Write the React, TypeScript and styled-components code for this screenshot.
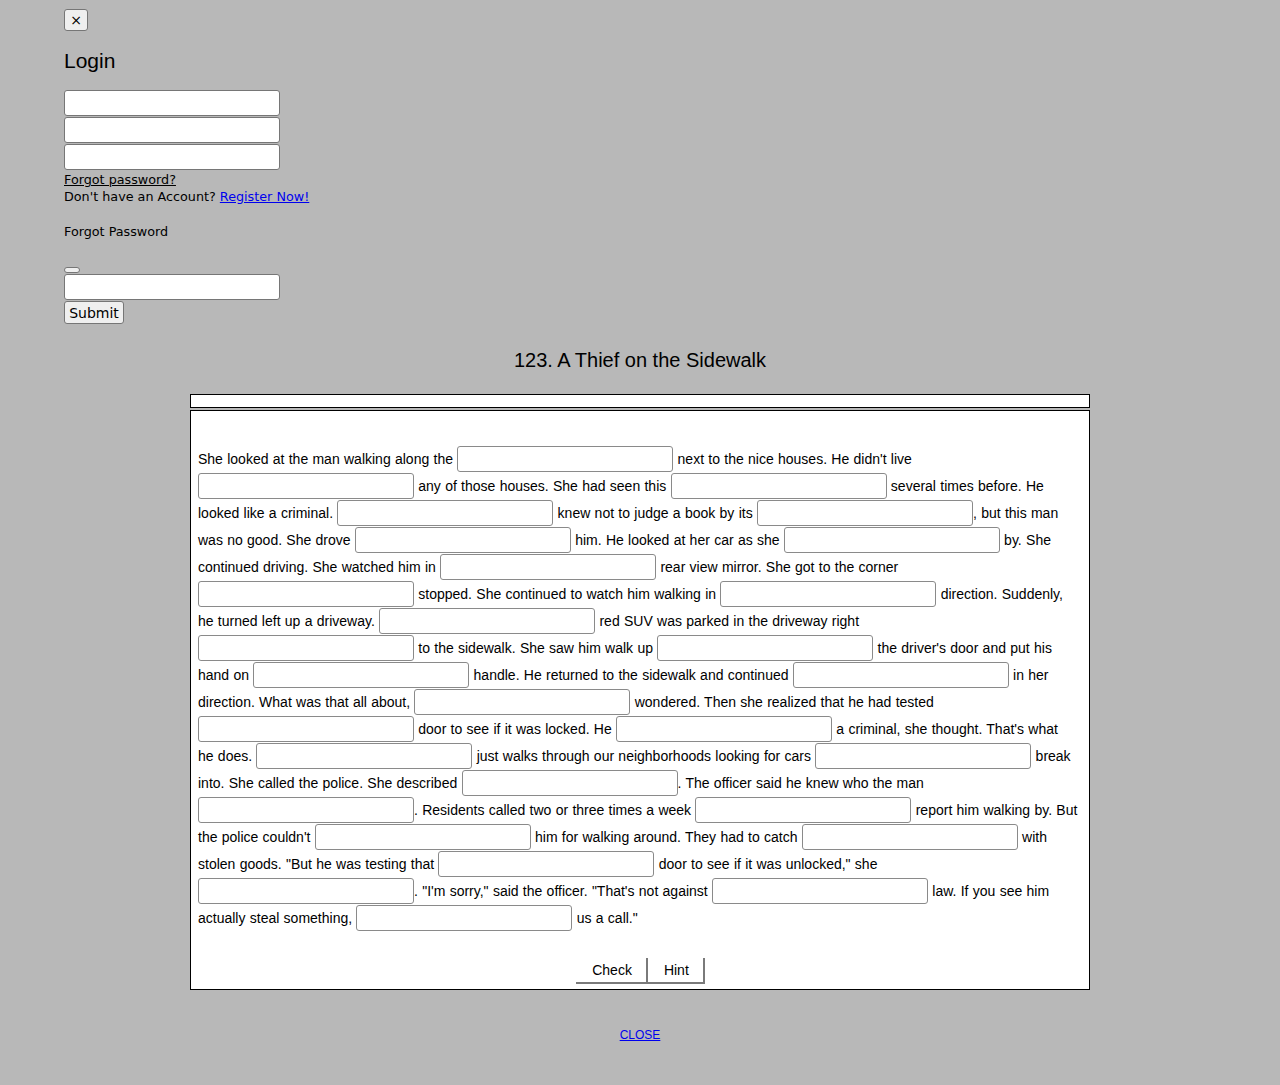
import React from "react";
import styled, { createGlobalStyle } from "styled-components";

const GlobalStyle = createGlobalStyle`
  html, body {
    margin: 0;
    padding: 0;
    background: #b8b8b8;
  }
  body {
    font-family: "DejaVu Sans", sans-serif;
    color: #000;
  }
`;

const Page = styled.div`
  min-height: 1085px;
  background: #b8b8b8;
  padding-top: 9px;
`;

const LoginPanel = styled.div`
  padding-left: 64px;
  display: flex;
  flex-direction: column;
  align-items: flex-start;
  font-family: "DejaVu Sans", sans-serif;
  font-size: 12.75px;
  line-height: 17px;
`;

const NativeButton = styled.button<{ $w?: number; $h?: number }>`
  box-sizing: border-box;
  width: ${(p) => (p.$w ? `${p.$w}px` : "auto")};
  height: ${(p) => (p.$h ? `${p.$h}px` : "auto")};
  padding: 0;
  background: #efefef;
  border: 1px solid #767676;
  border-radius: 3px;
  font-family: "DejaVu Sans", sans-serif;
  font-size: 14px;
  color: #000;
  display: flex;
  align-items: center;
  justify-content: center;
`;

const Heading = styled.h2`
  margin: 18px 0 17px;
  font-family: "Liberation Sans", sans-serif;
  font-weight: normal;
  font-size: 21px;
  line-height: 24px;
`;

const InputStack = styled.div<{ $top?: number }>`
  display: flex;
  flex-direction: column;
  gap: 1px;
  margin-top: ${(p) => p.$top ?? 0}px;
  margin-bottom: 1px;
`;

const TextInput = styled.input`
  box-sizing: border-box;
  width: 216px;
  height: 26px;
  margin: 0;
  padding: 0 4px;
  background: #fff;
  border: 1px solid #767676;
  border-radius: 3px;
  outline: none;
`;

const Line = styled.div`
  white-space: nowrap;
`;

const PlainLink = styled.a`
  color: #000;
  text-decoration: underline;
`;

const BlueLink = styled.a`
  color: #0000ee;
  text-decoration: underline;
`;

const SubHeading = styled.div`
  margin-top: 18px;
  margin-bottom: 27px;
`;

const Title = styled.h1`
  margin: 24px 0 22px;
  text-align: center;
  font-family: "Liberation Sans", sans-serif;
  font-weight: normal;
  font-size: 20px;
  line-height: 24px;
`;

const Frame = styled.div`
  width: 900px;
  margin: 0 auto;
  display: flex;
  flex-direction: column;
  gap: 2px;
`;

const TopBar = styled.div`
  box-sizing: border-box;
  height: 14px;
  background: #fff;
  border: 1px solid #000;
`;

const Exercise = styled.div`
  box-sizing: border-box;
  height: 580px;
  background: #fff;
  border: 1px solid #000;
  padding: 35px 7px 0;
  display: flex;
  flex-direction: column;
`;

const Passage = styled.div`
  font-family: "Liberation Sans", sans-serif;
  font-size: 14px;
  line-height: 27px;
  word-spacing: 0.4px;
`;

const PassageLine = styled.div`
  height: 27px;
  white-space: pre;
`;

const Blank = styled.input`
  box-sizing: border-box;
  width: 216px;
  height: 26px;
  margin: 0;
  padding: 0 4px;
  vertical-align: middle;
  background: #fff;
  border: 1px solid #8a8a8a;
  border-radius: 3px;
  outline: none;
  position: relative;
  top: -1px;
`;

const Actions = styled.div`
  margin-top: 26px;
  display: flex;
  justify-content: center;
  padding-left: 1px;
`;

const ActionButton = styled.button`
  box-sizing: border-box;
  height: 26px;
  padding: 0 14px 0 16px;
  background: #fff;
  border-style: solid;
  border-width: 0 2px 2px 0;
  border-color: #7a7a7a;
  font-family: "Liberation Sans", sans-serif;
  font-size: 14px;
  color: #000;
`;

const Footer = styled.div`
  margin-top: 38px;
  text-align: center;
  font-family: "Liberation Sans", sans-serif;
  font-size: 12px;
`;

type Seg = string | null;

const LINES: Seg[][] = [
  ["She looked at the man walking along the ", null, " next to the nice houses. He didn't live"],
  [null, " any of those houses. She had seen this ", null, " several times before. He"],
  ["looked like a criminal. ", null, " knew not to judge a book by its ", null, ", but this man"],
  ["was no good. She drove ", null, " him. He looked at her car as she ", null, " by. She"],
  ["continued driving. She watched him in ", null, " rear view mirror. She got to the corner"],
  [null, " stopped. She continued to watch him walking in ", null, " direction. Suddenly,"],
  ["he turned left up a driveway. ", null, " red SUV was parked in the driveway right"],
  [null, " to the sidewalk. She saw him walk up ", null, " the driver's door and put his"],
  ["hand on ", null, " handle. He returned to the sidewalk and continued ", null, " in her"],
  ["direction. What was that all about, ", null, " wondered. Then she realized that he had tested"],
  [null, " door to see if it was locked. He ", null, " a criminal, she thought. That's what"],
  ["he does. ", null, " just walks through our neighborhoods looking for cars ", null, " break"],
  ["into. She called the police. She described ", null, ". The officer said he knew who the man"],
  [null, ". Residents called two or three times a week ", null, " report him walking by. But"],
  ["the police couldn't ", null, " him for walking around. They had to catch ", null, " with"],
  ["stolen goods. \"But he was testing that ", null, " door to see if it was unlocked,\" she"],
  [null, ". \"I'm sorry,\" said the officer. \"That's not against ", null, " law. If you see him"],
  ["actually steal something, ", null, " us a call.\""],
];

export default function App() {
  return (
    <>
      <GlobalStyle />
      <Page>
        <LoginPanel>
          <NativeButton $w={24} $h={22}>×</NativeButton>
          <Heading>Login</Heading>
          <InputStack>
            <TextInput />
            <TextInput />
            <TextInput />
          </InputStack>
          <Line>
            <PlainLink href="#">Forgot password?</PlainLink>
          </Line>
          <Line>
            Don't have an Account? <BlueLink href="#">Register Now!</BlueLink>
          </Line>
          <SubHeading>Forgot Password</SubHeading>
          <NativeButton $w={16} $h={6} />
          <InputStack $top={1}>
            <TextInput />
          </InputStack>
          <NativeButton $w={60} $h={23}>Submit</NativeButton>
        </LoginPanel>

        <Title>123. A Thief on the Sidewalk</Title>

        <Frame>
          <TopBar />
          <Exercise>
            <Passage>
              {LINES.map((line, i) => (
                <PassageLine key={i}>
                  {line.map((seg, j) =>
                    seg === null ? <Blank key={j} type="text" /> : <React.Fragment key={j}>{seg}</React.Fragment>
                  )}
                </PassageLine>
              ))}
            </Passage>
            <Actions>
              <ActionButton>Check</ActionButton>
              <ActionButton>Hint</ActionButton>
            </Actions>
          </Exercise>
        </Frame>

        <Footer>
          <BlueLink href="#">CLOSE</BlueLink>
        </Footer>
      </Page>
    </>
  );
}
